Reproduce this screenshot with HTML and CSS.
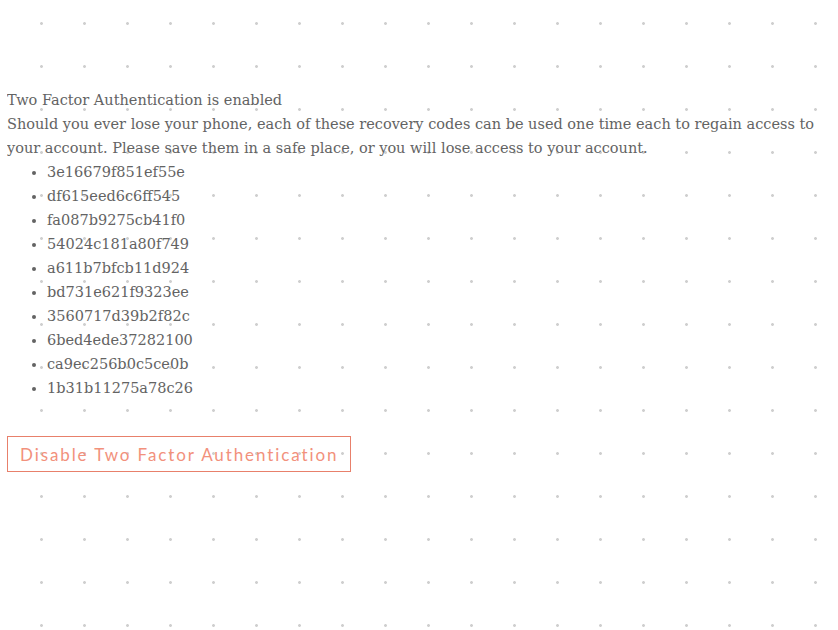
FILE: index.html
```html
<!DOCTYPE html>
<html lang="en">
  <head>
    <title>Two Factor Authentication</title>
    <link rel="stylesheet" href="styles.css">
  </head>

  <body>
    <main class="page">
      <p class="status">Two Factor Authentication is enabled</p>
      <p class="note">
        Should you ever lose your phone, each of these recovery codes can be used one time each to regain access to
        your account. Please save them in a safe place, or you will lose access to your account.
      </p>
      <ul class="codes">
        <li>3e16679f851ef55e</li>
        <li>df615eed6c6ff545</li>
        <li>fa087b9275cb41f0</li>
        <li>54024c181a80f749</li>
        <li>a611b7bfcb11d924</li>
        <li>bd731e621f9323ee</li>
        <li>3560717d39b2f82c</li>
        <li>6bed4ede37282100</li>
        <li>ca9ec256b0c5ce0b</li>
        <li>1b31b11275a78c26</li>
      </ul>

      <form class="disable-form">
        <button type="submit" class="btn-outline">Disable Two Factor Authentication</button>
      </form>
    </main>
  </body>
</html>
```

FILE: styles.css
```css
html {
  background-color: #fff;
  background-image: radial-gradient(circle at 21.5px 21.5px, #cfcfcf 1.1px, transparent 1.7px);
  background-size: 43px 43px;
  background-position: 20px 2px;
}
body {
  margin: 8px 8px 8px 7px;
  color: #636363;
  font-family: "DejaVu Serif", serif;
  font-size: 14.5px;
  line-height: 24px;
}
.page {
  padding-top: 80px;
}
.status,
.note {
  margin: 0;
}
.codes {
  margin: 0;
  padding-left: 40px;
}
.disable-form {
  margin-top: 36px;
}
.btn-outline {
  background: transparent;
  color: #f2917c;
  border: 1px solid #e8806b;
  border-radius: 0;
  padding: 0 12px;
  height: 36px;
  font-family: Lato, sans-serif;
  font-size: 17px;
  letter-spacing: 1.9px;
  cursor: pointer;
}
```
